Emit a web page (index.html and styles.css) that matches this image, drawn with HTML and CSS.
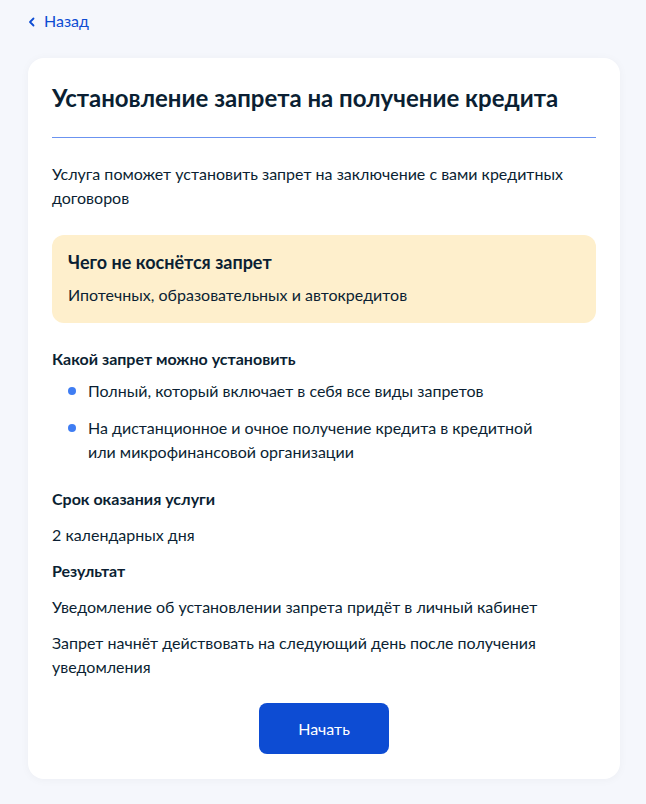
FILE: index.html
```html
<!DOCTYPE html>
<html lang="ru">
<head>
<meta charset="utf-8">
<link rel="stylesheet" href="styles.css">
</head>
<body>
<div class="page">
  <a class="back" href="#">
    <svg class="chev" width="8" height="10" viewBox="0 0 8 10"><path d="M5.5 1.5 L2 5 L5.5 8.5" fill="none" stroke="#0d4cd3" stroke-width="1.8" stroke-linecap="round" stroke-linejoin="round"/></svg>
    <span>Назад</span>
  </a>
  <div class="card">
    <h1 class="title">Установление запрета на получение кредита</h1>
    <div class="divider"></div>
    <p class="text lead">Услуга поможет установить запрет на заключение с вами кредитных договоров</p>
    <div class="notice">
      <div class="notice-title">Чего не коснётся запрет</div>
      <div class="text">Ипотечных, образовательных и автокредитов</div>
    </div>
    <h2 class="sub first">Какой запрет можно установить</h2>
    <ul class="list">
      <li>Полный, который включает в себя все виды запретов</li>
      <li>На дистанционное и очное получение кредита в кредитной<br>или микрофинансовой организации</li>
    </ul>
    <h2 class="sub after-list">Срок оказания услуги</h2>
    <p class="text gap">2 календарных дня</p>
    <h2 class="sub small">Результат</h2>
    <p class="text gap">Уведомление об установлении запрета придёт в личный кабинет</p>
    <p class="text gap">Запрет начнёт действовать на следующий день после получения<br>уведомления</p>
    <div class="actions"><button class="btn">Начать</button></div>
  </div>
</div>
</body>
</html>
```
FILE: styles.css
```css
* { box-sizing: border-box; }
html, body { margin: 0; padding: 0; }
body {
  background: #f5f7fc;
  font-family: Lato, "Noto Sans", sans-serif;
  color: #0b1f33;
}
.page {
  padding: 9px 26px 26px 28px;
}
.back {
  display: inline-flex;
  align-items: center;
  gap: 8px;
  color: #0d4cd3;
  text-decoration: none;
  font-size: 16px;
  line-height: 24px;
  height: 24px;
}
.chev { margin-left: 0; margin-top: 1px; }
.card {
  margin-top: 25px;
  background: #fff;
  border-radius: 16px;
  padding: 24px 24px 25px 24px;
  box-shadow: 0 1px 10px rgba(11, 31, 51, 0.04);
}
.title {
  margin: 0;
  font-size: 24px;
  line-height: 32px;
  font-weight: 700;
  letter-spacing: 0;
}
.divider {
  height: 1px;
  background-color: #6b93f0;
  margin-top: 23px;
}
.text {
  margin: 0;
  font-size: 16px;
  line-height: 24px;
}
.lead { margin-top: 24px; }
.notice {
  margin-top: 25px;
  background: #feefcc;
  border-radius: 12px;
  padding: 15px 16px 16px;
}
.notice-title {
  font-size: 18px;
  line-height: 24px;
  font-weight: 700;
  margin-bottom: 9px;
}
.sub {
  margin: 24px 0 0;
  font-size: 16px;
  line-height: 24px;
  font-weight: 700;
}
.sub.after-list { margin-top: 23px; }
.sub.small { margin-top: 12px; }
.list {
  list-style: none;
  margin: 8px 0 0;
  padding: 0 0 0 36px;
}
.list li {
  position: relative;
  font-size: 16px;
  line-height: 24px;
}
.list li + li { margin-top: 13px; }
.list li::before {
  content: "";
  position: absolute;
  left: -20px;
  top: 8px;
  width: 8px;
  height: 8px;
  border-radius: 50%;
  background: #3f7df3;
}
.gap { margin-top: 12px; }
.actions {
  display: flex;
  justify-content: center;
  margin-top: 24px;
}
.btn {
  width: 130px;
  height: 51px;
  border: 0;
  border-radius: 8px;
  background: #0d4cd3;
  color: #fff;
  font-family: Lato, "Noto Sans", sans-serif;
  font-size: 16px;
  line-height: 24px;
}
```
